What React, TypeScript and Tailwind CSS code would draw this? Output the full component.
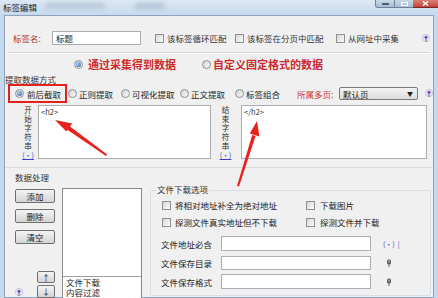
import React from 'react';

// Small Win7-style form controls
function CheckBox() {
  return (
    <span className="inline-block w-[9px] h-[9px] shrink-0 border border-[#8e8f8f] bg-linear-to-br from-[#d6d6d6] to-[#fbfbfb]" />
  );
}

function Radio({ on }: { on?: boolean }) {
  return (
    <span className="w-[9px] h-[9px] shrink-0 rounded-full border border-[#8e8f8f] bg-linear-to-br from-[#d2d2d2] to-[#fafafa] flex items-center justify-center">
      {on && (
        <span className="w-[5px] h-[5px] rounded-full bg-[radial-gradient(circle_at_35%_35%,#a8d0f8,#1d55a4)]" />
      )}
    </span>
  );
}

function HelpIcon() {
  return (
    <svg width="8" height="9" viewBox="0 0 8 9" className="shrink-0">
      <circle cx="4" cy="4" r="3.6" fill="#ececf6" stroke="#b4b4cc" strokeWidth="0.7" />
      <ellipse cx="4" cy="3.3" rx="1.5" ry="1.6" fill="#7a3fc0" />
      <rect x="3.5" y="5" width="1" height="3" fill="#6b6b8a" />
    </svg>
  );
}

function PinIcon() {
  return (
    <svg width="6" height="8" viewBox="0 0 6 8" className="shrink-0">
      <rect x="1" y="0.5" width="4" height="5" rx="1.5" fill="#5a5f66" />
      <rect x="2" y="1.5" width="2" height="2" fill="#9aa0a8" />
      <rect x="2.5" y="5.5" width="1" height="2.5" fill="#5a5f66" />
    </svg>
  );
}

function Btn({ children, className }: { children: React.ReactNode; className: string }) {
  return (
    <div
      className={`${className} border border-[#707070] rounded-[2px] bg-linear-to-b from-[#f4f4f4] to-[#d4d4d4] flex items-center justify-center text-[8.5px] leading-none text-[#222]`}
    >
      {children}
    </div>
  );
}

function VLabel({ text }: { text: string }) {
  return (
    <div className="flex flex-col items-center">
      {text.split('').map((c, i) => (
        <span key={i} className="h-[9px] text-[7.5px] leading-[9px] text-[#333]">
          {c}
        </span>
      ))}
      <span className="mt-[1px] text-[7px] leading-[8px] text-[#3b3bd0] underline">(•)</span>
    </div>
  );
}

export default function App() {
  return (
    <div className="relative w-[438px] h-[298px] overflow-hidden bg-[#c4d8ee] text-[#1c1c1c] font-['Noto_Sans_CJK_SC',sans-serif]">
      {/* Title bar */}
      <div className="h-[15px] flex items-start bg-linear-to-b from-[#dce8f4] to-[#c6d9ee]">
        <div className="ml-[3px] mt-[2px] text-[8.5px] leading-[10px] text-[#1e1e1e]">标签编辑</div>
        <div className="ml-[8px] mt-[3px] w-[60px] h-[6px] rounded-full bg-[#b9c9da] blur-[2px]" />
        <div className="ml-[30px] mt-[3px] w-[30px] h-[6px] rounded-full bg-[#b3c4d6] blur-[2px]" />
        <div className="ml-auto flex h-[8px]">
          <div className="w-[20px] border border-[#6f8299] border-t-0 rounded-bl-[3px] bg-linear-to-b from-[#c9d8e9] to-[#a9bdd4] flex items-center justify-center">
            <span className="w-[7px] h-[2px] bg-white border border-[#4c5f78]" />
          </div>
          <div className="w-[18px] border-b border-[#6f8299] bg-linear-to-b from-[#c9d8e9] to-[#a9bdd4] flex items-center justify-center">
            <span className="w-[7px] h-[4px] border border-white" />
          </div>
          <div className="w-[25px] border-b border-[#7a2a22] bg-linear-to-b from-[#d97f72] to-[#c4423a] flex items-center justify-center">
            <svg width="7" height="5" viewBox="0 0 7 5">
              <path d="M1 0.5 L6 4.5 M6 0.5 L1 4.5" stroke="#fff" strokeWidth="1.4" />
            </svg>
          </div>
        </div>
      </div>

      {/* Window body */}
      <div className="mx-[4px] h-[283px] border border-[#8ea3bb] bg-[#f0f0f0] text-[8.5px] leading-[10px]">
        {/* Row 1 */}
        <div className="mt-[15px] h-[14px] flex items-center">
          <div className="ml-[8px] w-[39px] text-[#b3302e]">标签名:</div>
          <div className="w-[89px] h-[14px] border border-[#abadb3] bg-white pl-[3px] flex items-center">标题</div>
          <div className="ml-[14px] w-[80px] flex items-center">
            <CheckBox />
            <span className="ml-[3px] text-[#333]">该标签循环匹配</span>
          </div>
          <div className="w-[101px] flex items-center">
            <CheckBox />
            <span className="ml-[3px] text-[#333]">该标签在分页中匹配</span>
          </div>
          <div className="w-[86px] flex items-center">
            <CheckBox />
            <span className="ml-[3px] text-[#333]">从网址中采集</span>
          </div>
          <HelpIcon />
        </div>

        <div className="mt-[7px] mx-[3px] h-[2px] border-t border-[#d6d6d6] border-b border-b-white" />

        {/* Row 2 */}
        <div className="mt-[3px] h-[14px] flex items-center">
          <div className="ml-[69px] w-[128px] flex items-center">
            <Radio on />
            <span className="ml-[5px] text-[11px] leading-[13px] font-bold text-[#cc2a2e]">通过采集得到数据</span>
          </div>
          <div className="flex items-center">
            <Radio />
            <span className="ml-[2px] text-[11px] leading-[13px] font-bold text-[#cc2a2e]">自定义固定格式的数据</span>
          </div>
        </div>

        {/* 提取数据方式 */}
        <div className="mt-[4px] h-[9px] leading-[9px] text-[#333]">提取数据方式</div>
        <div className="h-[19px] flex items-center">
          <div className="ml-[3px] w-[59px] h-[19px] border-2 border-[#e3211d] flex items-center pl-[5px]">
            <Radio on />
            <span className="ml-[3px]">前后截取</span>
          </div>
          <div className="ml-[1px] w-[53px] flex items-center">
            <Radio />
            <span className="ml-[2px]">正则提取</span>
          </div>
          <div className="w-[59px] flex items-center">
            <Radio />
            <span className="ml-[2px]">可视化提取</span>
          </div>
          <div className="w-[55px] flex items-center">
            <Radio />
            <span className="ml-[2px]">正文提取</span>
          </div>
          <div className="w-[62px] flex items-center">
            <Radio />
            <span className="ml-[2px]">标签组合</span>
          </div>
          <div className="w-[42px] text-[#c93a36]">所属多页:</div>
          <div className="w-[79px] h-[13px] border border-[#7a7a7a] rounded-[2px] bg-linear-to-b from-[#f4f4f4] to-[#dcdcdc] flex items-center pl-[3px] pr-[4px]">
            <span>默认页</span>
            <span className="ml-auto text-[6px] leading-none">▼</span>
          </div>
          <div className="ml-[7px]">
            <HelpIcon />
          </div>
        </div>

        {/* Start / end strings */}
        <div className="mt-[2px] h-[54px] flex items-start">
          <div className="ml-[15px] w-[16px]">
            <VLabel text="开始字符串" />
          </div>
          <div className="ml-[2px] w-[173px] h-[54px] border border-[#abadb3] bg-white pl-[2px] pt-[1px] text-[7.5px] leading-[9px] text-[#333]">
            {'<h2>'}
          </div>
          <div className="ml-[7px] w-[15px]">
            <VLabel text="结束字符串" />
          </div>
          <div className="ml-[8px] w-[186px] h-[54px] border border-[#abadb3] bg-white pl-[2px] pt-[1px] text-[7.5px] leading-[9px] text-[#333]">
            {'</h2>'}
          </div>
        </div>

        <div className="mt-[8px] h-[1px] bg-[#dcdcdc]" />

        {/* 数据处理 */}
        <div className="mt-[4px] ml-[10px] h-[10px] text-[#333]">数据处理</div>
        <div className="mt-[6px] flex items-start">
          <div className="ml-[10px] w-[40px] flex flex-col">
            <Btn className="mt-[1px] h-[14px]">添加</Btn>
            <Btn className="mt-[6px] h-[14px]">删除</Btn>
            <Btn className="mt-[7px] h-[14px]">清空</Btn>
            <Btn className="mt-[27px] self-end w-[18px] h-[12px]">↑</Btn>
            <div className="mt-[2px] h-[13px] flex items-end justify-between">
              <div className="mb-[1px]">
                <HelpIcon />
              </div>
              <Btn className="w-[18px] h-[13px]">↓</Btn>
            </div>
          </div>

          <div className="ml-[7px] w-[80px] h-[112px] border border-[#828790] bg-white flex flex-col">
            <div className="h-[87px]" />
            <div className="border-t border-[#a0a0a0] pl-[3px] pt-[1px] text-[8.5px] leading-[9.5px]">
              <div>文件下载</div>
              <div>内容过滤</div>
            </div>
          </div>

          <div className="ml-[8px] mt-[2px] w-[281px] h-[106px] border border-[#d5dfe5] rounded-[3px]">
            <div className="-mt-[6px] ml-[5px] w-fit px-[1px] bg-[#f0f0f0] leading-[9px] text-[#333]">文件下载选项</div>
            <div className="mt-[6px] h-[10px] flex items-center">
              <div className="ml-[11px] w-[144px] flex items-center">
                <CheckBox />
                <span className="ml-[4px]">将相对地址补全为绝对地址</span>
              </div>
              <CheckBox />
              <span className="ml-[5px]">下载图片</span>
            </div>
            <div className="mt-[7px] h-[10px] flex items-center">
              <div className="ml-[11px] w-[144px] flex items-center">
                <CheckBox />
                <span className="ml-[4px]">探测文件真实地址但不下载</span>
              </div>
              <CheckBox />
              <span className="ml-[5px]">探测文件并下载</span>
            </div>
            <div className="mt-[9px] h-[15px] flex items-center">
              <div className="ml-[10px] w-[60px]">文件地址必含</div>
              <div className="w-[150px] h-[15px] border border-[#abadb3] bg-white" />
              <span className="ml-[12px] text-[7px] text-[#3b3bd0]">(•)&nbsp;&nbsp;|</span>
            </div>
            <div className="mt-[5px] h-[14px] flex items-center">
              <div className="ml-[10px] w-[60px]">文件保存目录</div>
              <div className="w-[150px] h-[14px] border border-[#abadb3] bg-white" />
              <div className="ml-[15px]">
                <PinIcon />
              </div>
            </div>
            <div className="mt-[4px] h-[15px] flex items-center">
              <div className="ml-[10px] w-[60px]">文件保存格式</div>
              <div className="w-[150px] h-[15px] border border-[#abadb3] bg-white" />
              <div className="ml-[15px]">
                <PinIcon />
              </div>
            </div>
          </div>
        </div>
      </div>

      {/* Red annotation arrows */}
      <svg className="absolute left-0 top-0 pointer-events-none" width="438" height="298" viewBox="0 0 438 298">
        <polygon points="106,156 107.2,154.4 69,125.8 66.6,129.2" fill="#e8211c" />
        <polygon points="55,120 72.2,123.4 66.4,131.6" fill="#e8211c" />
        <polygon points="237,186 239,186.5 255.6,136 252.2,135" fill="#e8211c" />
        <polygon points="257,121 259.4,136.4 249.8,133.6" fill="#e8211c" />
      </svg>
    </div>
  );
}
